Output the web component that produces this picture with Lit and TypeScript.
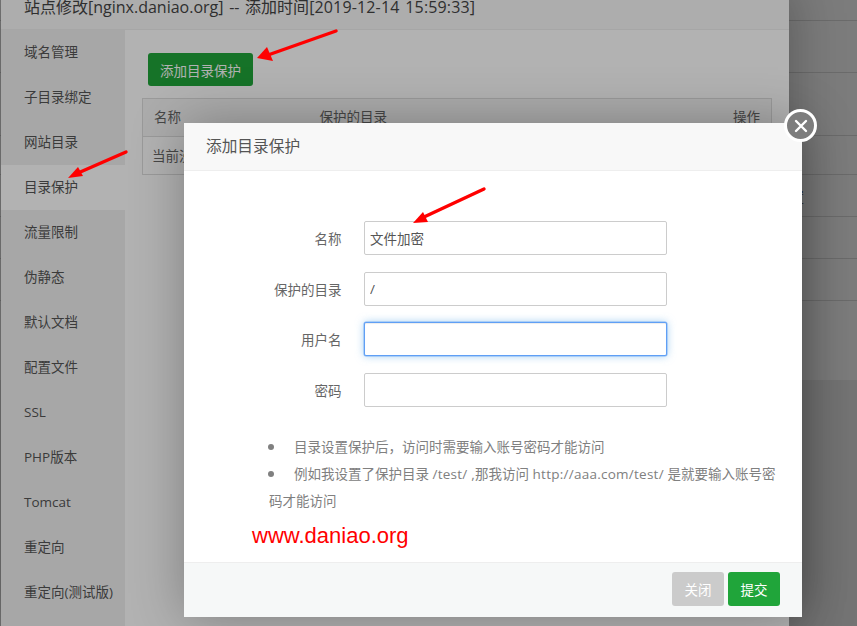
import { LitElement, html, css, svg } from "lit";
import { customElement } from "lit/decorators.js";

const MENU = ["域名管理","子目录绑定","网站目录","目录保护","流量限制","伪静态","默认文档","配置文件","SSL","PHP版本","Tomcat","重定向","重定向(测试版)"];
const PAGE_ROWS = [21, 52, 63, 39, 42, 42, 42, 79];

const arrow = (x1:number,y1:number,x2:number,y2:number,pts:string) => svg`
  <line x1=${x1} y1=${y1} x2=${x2} y2=${y2} stroke="#f00" stroke-width="3.4" stroke-linecap="round"></line>
  <polygon points=${pts} fill="#f00"></polygon>`;

@customElement("app-root")
export class AppRoot extends LitElement {
  static styles = css`
    :host { display:block; position:relative; width:857px; height:626px; overflow:hidden; background:#eee;
      font-family:"Open Sans","Noto Sans CJK SC",sans-serif; font-size:13.5px; color:#555; }
    .page { display:flex; flex-direction:column; background:#eee; height:626px; }
    .page-row { background:#fff; border-bottom:1px solid #ddd; box-sizing:border-box; flex:none; display:flex; align-items:center; padding-left:777px; color:#444; white-space:nowrap; }
    .page-row.end { border-bottom:none; }
    .shade { position:absolute; inset:0; background:rgba(0,0,0,.3); }
    .win { position:absolute; left:1px; top:-13px; width:788px; height:639px; background:#fff; display:flex; flex-direction:column; box-shadow:1px 1px 50px rgba(0,0,0,.3); }
    .win-title { flex:none; height:43px; box-sizing:border-box; background:#f8f8f8; border-bottom:1px solid #eee; padding-left:23px; font-size:16px; line-height:40px; color:#444; white-space:nowrap; word-spacing:1.5px; }
    .wide { letter-spacing:.15px; }
    .win-body { flex:1; display:flex; min-height:0; }
    .side { flex:none; width:124px; background:#f0f0f0; display:flex; flex-direction:column; }
    .side-item { height:45px; flex:none; line-height:45px; padding-left:23px; color:#555; white-space:nowrap; }
    .side-item.on { background:#fff; }
    .main { flex:1; padding:23px 16px 0 17px; min-width:0; }
    .add { display:block; margin-left:6px; width:105px; height:33px; border:none; border-radius:3px; background:#20a53a; color:#fff; font:inherit; padding:0; }
    table { margin-top:12px; width:630px; border-collapse:collapse; table-layout:fixed; }
    th,td { border:1px solid #ddd; font-weight:400; text-align:left; color:#666; padding:0 11px; white-space:nowrap; }
    th { height:38px; box-sizing:border-box; background:#f6f6f6; border-left:none; border-right:none; padding-bottom:4px; }
    th:first-child { border-left:1px solid #ddd; }
    th:last-child { border-right:1px solid #ddd; text-align:right; }
    td { height:38px; box-sizing:border-box; padding:0 9px 2px; }
    .modal { position:absolute; left:184px; top:123px; width:618px; height:494px; background:#fff; display:flex; flex-direction:column; box-shadow:1px 1px 50px rgba(0,0,0,.3); }
    .m-title { flex:none; height:48px; box-sizing:border-box; background:#f8f8f8; border-bottom:1px solid #eee; padding-left:22px; font-size:15.7px; line-height:47px; color:#555; }
    .m-body { flex:1; min-height:0; padding-top:50px; }
    .form { display:flex; flex-direction:column; gap:16.67px; }
    .row { display:flex; align-items:center; gap:22.5px; }
    .row label { width:157.5px; text-align:right; color:#666; }
    .row input { width:303px; height:34px; box-sizing:border-box; border:1px solid #ccc; border-radius:2px; padding:0 5px; font:inherit; color:#555; outline:none; background:#fff; }
    .row input.focus { border-color:#5f9ff5; box-shadow:0 0 0 .5px rgba(95,159,245,.7),inset 0 1px 1px rgba(0,0,0,.075),0 0 8px rgba(102,175,233,.6); }
    .notes { list-style:none; margin:27px 0 0 85px; padding:0; width:516px; line-height:27px; color:#808080; }
    .notes li::before { content:""; display:inline-block; width:6px; height:6px; border-radius:50%; background:#808080; margin:0 20px 2px 0; margin-left:-1px; vertical-align:middle; }
    .url { letter-spacing:.25px; }
    .m-foot { flex:none; height:55px; box-sizing:border-box; background:#f6f8f8; border-top:1px solid #eee; display:flex; justify-content:flex-end; align-items:flex-start; gap:4px; padding:9px 22px 0 0; }
    .btn { width:52px; height:34px; border:none; border-radius:3px; color:#fff; font:inherit; padding:0; }
    .btn.gray { background:#cbcbcb; }
    .btn.green { background:#20a53a; }
    .close { position:absolute; left:784px; top:109px; width:33px; height:33px; box-sizing:border-box; border:3px solid #fff; border-radius:50%; background:#7d7d7d; display:flex; align-items:center; justify-content:center; }
    .close svg { display:block; }
    .arrows { position:absolute; left:0; top:0; pointer-events:none; }
    .mark { position:absolute; left:252px; top:520px; font:22px/32px "Liberation Sans",sans-serif; color:#f00; white-space:nowrap; }
  `;
  render() {
    return html`
      <div class="page">
        ${PAGE_ROWS.map((h,i)=>html`<div class="page-row ${i===7?"end":""}" style="height:${h}px">${i===4?"设置":""}</div>`)}
      </div>
      <div class="shade"></div>
      <div class="win">
        <div class="win-title">站点修改[nginx.daniao.org] -- 添加时间<span class="wide">[2019-12-14 15:59:33]</span></div>
        <div class="win-body">
          <div class="side">${MENU.map((m,i)=>html`<div class="side-item ${i===3?"on":""}">${m}</div>`)}</div>
          <div class="main">
            <button class="add">添加目录保护</button>
            <table>
              <colgroup><col style="width:166px"><col><col style="width:120px"></colgroup>
              <tr><th>名称</th><th>保护的目录</th><th>操作</th></tr>
              <tr><td colspan="3">当前没有数据</td></tr>
            </table>
          </div>
        </div>
      </div>
      <div class="shade"></div>
      <div class="modal">
        <div class="m-title">添加目录保护</div>
        <div class="m-body">
          <div class="form">
            <div class="row"><label>名称</label><input value="文件加密"></div>
            <div class="row"><label>保护的目录</label><input value="/"></div>
            <div class="row"><label>用户名</label><input class="focus"></div>
            <div class="row"><label>密码</label><input></div>
          </div>
          <ul class="notes">
            <li>目录设置保护后，访问时需要输入账号密码才能访问</li>
            <li>例如我设置了保护目录 <span class="url">/test/ ,</span>那我访问 <span class="url">http://aaa.com/test/</span> 是就要输入账号密码才能访问</li>
          </ul>
        </div>
        <div class="m-foot"><button class="btn gray">关闭</button><button class="btn green">提交</button></div>
      </div>
      <div class="close"><svg width="14" height="14" viewBox="0 0 14 14"><path d="M2 2 12 12M12 2 2 12" stroke="#fff" stroke-width="2.4" stroke-linecap="round" fill="none"></path></svg></div>
      <span class="mark">www.daniao.org</span>
      <svg class="arrows" width="857" height="626" viewBox="0 0 857 626">
        ${arrow(336,31,268,55,"257,58 267,47 273,61")}
        ${arrow(126,152,78,173,"68,178 78,167 83,176")}
        ${arrow(484,189,424,217,"413,223 423,212 428,222")}
      </svg>
    `;
  }
}
